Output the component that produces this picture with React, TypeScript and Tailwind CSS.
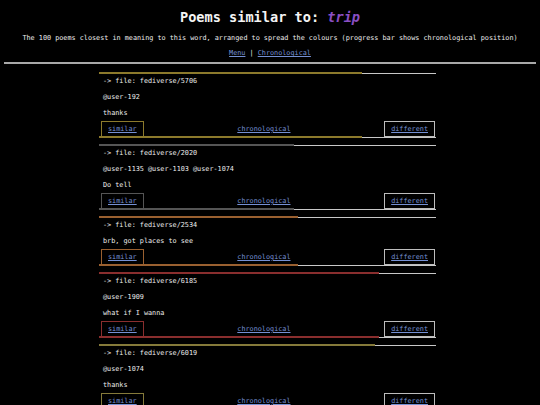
import React from "react";

type Poem = {
  file: string;
  lines: string[];
  color: string;
  pct: number;
};

const poems: Poem[] = [
  { file: "fediverse/5706", lines: ["@user-192", "thanks"], color: "#8c7a2c", pct: 78 },
  { file: "fediverse/2020", lines: ["@user-1135 @user-1103 @user-1074", "Do tell"], color: "#555555", pct: 58 },
  { file: "fediverse/2534", lines: ["brb, got places to see"], color: "#9a6030", pct: 59 },
  { file: "fediverse/6185", lines: ["@user-1909", "what if I wanna"], color: "#8a2e2e", pct: 83 },
  { file: "fediverse/6019", lines: ["@user-1074", "thanks"], color: "#857a3a", pct: 82 },
];

// progress bar: thick coloured part, thin light remainder
const Bar = ({ color, pct }: { color: string; pct: number }) => (
  <div className="relative z-10 -my-px flex h-[2px] items-center">
    <div className="h-[2px]" style={{ width: `${pct}%`, backgroundColor: color }} />
    <div className="h-px flex-1 bg-[#c8c8c8]" />
  </div>
);

const Card = ({ poem }: { poem: Poem }) => (
  <div className="flex w-[337px] flex-col">
    <Bar color={poem.color} pct={poem.pct} />
    <div className="flex h-4 items-center pl-[4px]">-&gt; file: {poem.file}</div>
    {poem.lines.map((l, i) => (
      <div key={i} className="flex h-4 items-center pl-[4px] whitespace-pre">
        {l}
      </div>
    ))}
    <div className="flex h-4 items-center justify-between pl-[2px] pr-[1px]">
      <a
        className="flex h-4 items-center border px-[6px] text-[#7590d4] underline"
        style={{ borderColor: poem.color }}
      >
        similar
      </a>
      <a className="text-[#7590d4] underline">chronological</a>
      <a className="flex h-4 items-center border border-[#bdbdbd] px-[6px] text-[#7590d4] underline">
        different
      </a>
    </div>
    <Bar color={poem.color} pct={poem.pct} />
  </div>
);

export default function App() {
  return (
    <div className="min-h-screen bg-black text-[6.8px] text-[#ededed] [font-family:'DejaVu_Sans_Mono',monospace]">
      {/* HEADER */}
      <div className="flex h-[30px] items-center justify-center pt-[4px] text-[13.6px] font-bold text-[#f4f4f4]">
        Poems similar to:&nbsp;<span className="italic text-[#8b4fc4]">trip</span>
      </div>
      <div className="h-[16px] text-center leading-[16px]">
        The 100 poems closest in meaning to this word, arranged to spread the colours (progress bar shows chronological position)
      </div>
      <div className="h-[14px] text-center leading-[14px]">
        <a className="text-[#7590d4] underline">Menu</a> | <a className="text-[#7590d4] underline">Chronological</a>
      </div>
      <div className="mx-[4px] mt-[2px] h-[2px] bg-[#a8a8a8]" />

      {/* POEMS */}
      <div className="ml-[99px] flex flex-col gap-[8px] pt-[9px] pb-4">
        {poems.map((p) => (
          <Card key={p.file} poem={p} />
        ))}
      </div>
    </div>
  );
}
